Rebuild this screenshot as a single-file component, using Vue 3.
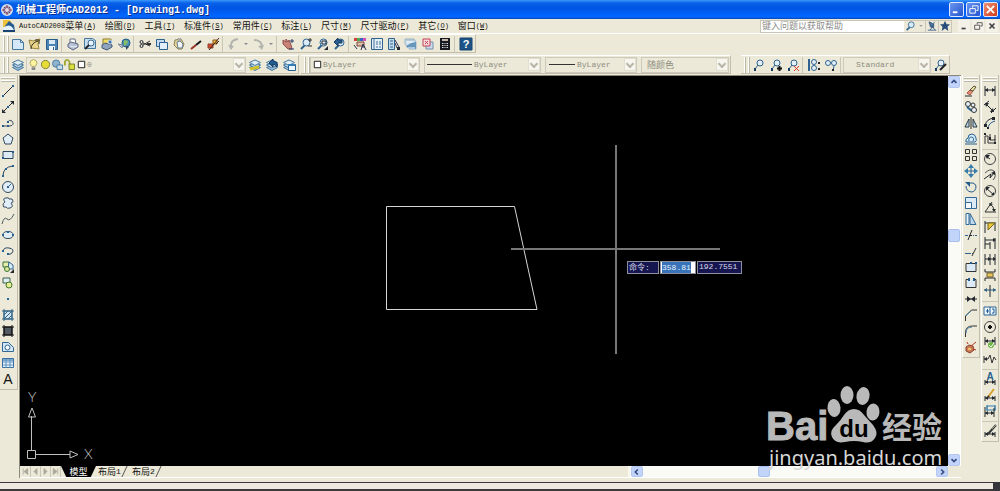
<script setup>
import { h } from 'vue'

const ink = '#23282e'
const blue = '#2f638f'
const pale = '#c3dcf2'
const line = (d, stroke = ink, width = 1) => ({ d, stroke, 'stroke-width': width, fill: 'none' })
const fill = (d, color = ink, stroke = 'none', width = 1) => ({ d, fill: color, stroke, 'stroke-width': width })
const ring = (x, y, r) => `M${x - r} ${y}a${r} ${r} 0 1 0 ${2 * r} 0a${r} ${r} 0 1 0 ${-2 * r} 0`

const stack = [
  fill('M.5 8.5L6 6l5.5 2.5L6 11.5z', '#9cbcd8', '#47799f'),
  fill('M.5 6L6 3.5 11.5 6 6 9z', '#bcd5e8', '#47799f'),
  fill('M.5 3.5L6 1l5.5 2.5L6 6.5z', '#e0edf5', '#47799f'),
]
const glass = [line('M2 11l4-4', blue, 2), fill(ring(7.5, 4.5, 3.5), '#d9ecfa', blue)]
const dims = line('M1 1v10M11 1v10M1 5h10')
const heads = fill('M1 5l3-2v4zM11 5l-3-2v4z')
const lowDim = [line('M1 7v5M11 7v5M1 9h10'), fill('M1 9l3-2v4zM11 9l-3-2v4z')]
const node = [fill(ring(7, 4, 3), '#e4eff7', blue), line('M5 6l-3 4', blue), fill('M1 9h2v3H1z', '#173c61')]

const icons = {
  gear: [fill(ring(6, 6, 5), '#8899bb', '#d9e0ee', 2), line('M3 3l6 6M9 3l-6 6M6 1v10M1 6h10', '#982f46'), fill(ring(6, 6, 2), '#e1ddeb')],
  file: [fill('M0 0h7l2 3v4H0z', '#efc23b'), fill('M2 6l4-5 5 4 1 7H0z', '#245c91'), fill('M1 7q5-3 8 0l2 3H0z', '#e3f0fa'), fill('M0 10h12v2H0z', '#194371')],
  page: [fill('M.5 1.5h8l3 3v7H.5z', '#d4e8f7', '#47799f'), line('M8.5 1.5v3h3', '#47799f')],
  open: [fill('M0 2l4 1 7-2-2 5 1 5-8-1z', '#ead58a', '#97843e'), line('M2 11q0-6 7-8M6 2h4v4', '#383321', 1)],
  save: [fill('M.5 1.5h11v10H.5z', '#4b83b4', '#285d88'), fill('M3 2h6v4H3z', '#d9eaf7'), fill('M3 8h6v4H3z', '#eff6fb'), fill('M7 9h1v3H7z', '#285d88')],
  print: [fill('M3 1h5l1 5H3z', '#fff', '#626d86'), fill('M1 6l3-2 7 2v3l-5 3-5-3z', '#b4bfd4', '#5f6985'), line('M3 8l4 1 3-1', '#eef2f7')],
  preview: [fill('M.5.5h8l3 2v8H.5z', '#c6ddf0', '#47799f'), fill(ring(7, 5, 3), '#e7f4fd', '#39678c'), line('M5 7l-4 4', ink, 2)],
  publish: [fill('M2 1h8v8H2z', '#f2dc5f', '#8b7c35'), fill('M1 7l3-2 7 2v2l-5 3-5-2z', '#8fa3bd', '#46597a'), fill(ring(9, 4, 2), '#3a70b0', '#cde')],
  globe: [fill(ring(8, 5, 4), '#4f91b5', '#225b83'), fill('M6 2l4 1-1 3-3 2z', '#89bd62'), fill('M0 6l5 1-1 3z', '#bac4d0', '#7a8798'), fill('M8 8l3 1-3 3z', '#394a60')],
  cut: [line('M11 3L4 7M11 8L4 5', '#333'), line('M8 6h4', '#333', 2), line(ring(2.5, 4, 1.5)), line(ring(2.5, 8, 1.5))],
  copy: [fill('M.5 1.5h8v7h-8z', pale, blue), fill('M3.500 4.500h8v7h-8z', '#e1effa', blue)],
  paste: [fill('M2 2l6-1 3 5-2 5H5L1 7z', '#e2d49a', '#8b8153'), fill('M4 4l3-1 3 3-1 4H5z', '#f5f7fb', '#677f92'), fill('M5 0h3v3H5z', '#aaa')],
  brush: [line('M1 11l5-4', '#9c3424', 2), line('M6 7l5-4', '#17191d', 2)],
  edit: [fill('M6 2h4v4H6z', '#efbd3a', '#8f5420'), fill('M1 6h5v4H1z', '#d64c2a', '#8b4131'), line('M2 12L12 0M9 6l3-3', '#3b2317')],
  undo: [line('M3 11V7q0-5 7-6', '#b4b5af', 2), fill('M0 7l3 5 3-4z', '#b4b5af')],
  redo: [line('M1 2q7 0 8 6', '#b4b5af', 2), fill('M5 8l4 4 2-5z', '#b4b5af')],
  caret: [fill('M4 5h4L6 7z', '#888')],
  pan: [fill('M1 2l3 2V1l2 3 1-2 2 5 1 4H6L1 6z', '#c98377', '#914f4c'), line('M8 3h4M10 1v4M7 11h5', '#253c67')],
  zoom: [...glass, line('M9 2h4M11 0v4M9 8h4', '#333')],
  zoomWindow: [...glass, line('M6 3h4v3H6z'), fill('M12 8v4H8z')],
  zoomPrevious: [...glass, fill('M1 4l4-4v2h4v3H5v3z', '#295d96', '#19395e')],
  properties: [fill('M0 0h3v3H0z', '#d23e3e'), fill('M3 0h3v3H3z', '#52a852'), fill('M6 0h3v3H6z', '#3b65c5'), fill('M9 0h3v3H9z', '#d050b8'), fill('M3 4h7v4H3z', '#ddbda7', '#7d483e'), line('M0 7l3 4M7 12l2-6 3 6M8 9h3', '#2b3453')],
  center: [fill('M.5.5h11v11H.5z', '#e2edf6', blue), line('M3 1v10M6 3v2M9 3v2M5 6h2M8 6h2M6 8v2M9 8v2', '#41739b')],
  palettes: [fill('M.5.5h6v11h-6z', '#c3daec', blue), line('M2 3h3M2 6h3M2 9h3', blue), line('M7 2l4 7M7 5l2 5', '#335'), fill('M9 9h3v3H9z')],
  sheets: [fill('M0 1h9l2 3v7H4l-4-5z', '#d3e2ed', '#9bb3c7'), fill('M1 8l5-3 5-1v7H4z', '#6897bd'), line('M2 4h6M3 10h7', '#f4f8fb'), line('M1 2h8', '#9bb3c7')],
  markup: [fill('M4 4h7v7H4z', '#c9dced', '#7492ad'), fill('M1 1h7v7H1z', '#f6d9dc', '#c44156', 1), line('M3 3l3 3M6 3L3 6', '#c44156')],
  calc: [fill('M1 0h10v12H1z', '#171a20'), fill('M3 1h6v2H3z', '#c9b9ad'), line('M3 5.500h6M3 7.500h6M3 9.500h6', '#ddd'), line('M5 4v7M7 4v7', '#171a20')],
  help: [fill('M0 0h12v12H0z', '#1c5387', '#174571')],
  layers: stack,
  layerMake: [...stack, line('M1 10l9-2', '#d0c329', 3)],
  layerPrevious: [...stack, fill('M3 4l4-4v2q6 1 4 6-2-3-4-3v3z', '#215d91', '#173c61')],
  layerStates: [...stack, fill('M5.500 5.500h7v6h-7z', '#eaf6ff', '#27618f'), fill('M5 5h7v2H5z', '#347cb5')],
  bulb: [fill('M4 8Q1 5 3 2q3-3 6 0 2 3-1 6z', '#fff4a0', '#a9a05f'), fill('M4 9h4v3H4z', '#888')],
  sun: [fill(ring(6, 6, 4.5), '#e7dc35', '#787d38')],
  freeze: [fill(ring(4.5, 5, 4), '#8eb4cd', '#47799f'), fill('M5.500 6.500h6v5h-6z', '#c7dbea', '#47799f')],
  lock: [line('M1 7V3q2-4 5 0v3', '#a2a932', 2), fill('M5.500 5.500h6v6h-6z', '#d8dc3c', '#717c27')],
  swatch: [fill('M2.500 2.500h7v7h-7z', '#fff', '#111')],
  query: [...glass],
  mic: [fill('M3 1l5 3v4L4 7z', '#5d7fa6', '#294b78'), line('M1 11h10M2 2l8 9M9 1L4 11', '#355b86')],
  star: [fill('M6 0l2 4h4L9 7l1 5-4-3-4 3 1-5-3-3h4z', '#294d7b')],
  visual: node,
  visualAdd: [...node, line('M7 9.500h5M9.500 7v5', '#111', 2)],
  visualRemove: [...node, line('M7 7l5 5M12 7l-5 5', '#d8372b', 1)],
  visualList: [line('M1 0v12', blue, 2), fill(ring(6, 3, 2.5), '#e4eff7', blue), fill(ring(6, 9, 2.5), '#e4eff7', blue), fill('M10 3h2v2h-2zM10 9h2v2h-2z')],
  visualPair: [fill(ring(3, 4, 2.5), '#e4eff7', blue), fill(ring(9, 4, 2.5), '#e4eff7', blue), line('M9 7l-1 5', blue), fill('M7 10h2v2H7z')],
  visualEdit: [...node, line('M6 11l6-6', '#222', 2)],
  lineTool: [line('M1 11L11 1'), fill('M0 10h2v2H0zM10 0h2v2h-2z', '#286493')],
  ray: [line('M1 11L11 1', ink), fill('M0 12V8l4 4zM12 0v4L8 0z'), fill('M5 5h2v2H5z', '#286493')],
  polyline: [line('M1 9h7q5-1 2-5-3-2-4 1', '#3f5366'), fill('M0 8h2v2H0zM5 8h2v2H5zM5 4h2v2H5z', '#285b87')],
  polygon: [fill('M6 1l5 4-2 6H3L1 5z', '#e1edf7', '#30485d')],
  rect: [fill('M1 2.500h10v7H1z', '#dceaf6', '#30485d'), fill('M0 8h2v2H0zM10 2h2v2h-2z', '#235c91')],
  arc: [line('M1 11q0-9 10-10', '#30485d'), fill('M0 10h2v2H0zM3 3h2v2H3zM10 0h2v2h-2z', '#286493')],
  circle: [fill(ring(6, 6, 5.5), '#e1edf7', '#30485d'), line('M6 6l3-3', '#286493', 1), fill('M5 5h2v2H5z', '#286493')],
  cloud: [fill('M3 5q-3-4 1-4 3-1 3 1 4-1 4 2 0 2-2 2 3 4-1 5-3 1-4-1-3 1-3-2 0-2 2-3z', '#e1edf7', '#384d62')],
  spline: [line('M0 11q2-8 5-5t7-5', '#4f5b60')],
  ellipse: [fill('M1 6q0-3.500 5-3.500T11 6 6 9.500 1 6', '#e1edf7', '#30485d'), fill('M0 5h2v2H0zM10 5h2v2h-2zM5 2h2v2H5z', '#286493')],
  ellipseArc: [line('M1 6q1-4 6-3 6 1 3 5-2 2-4 1', '#30485d', 1), fill('M0 5h2v2H0zM5 8h2v2H5z', '#286493')],
  block: [fill('M1 1h6v5H1z', '#e7efaf', '#3c713c'), fill('M7 1l4 3v4H6z', '#d9ecfa', blue), fill(ring(5, 8, 2.5), '#d8e99d', '#3d7335'), fill('M12 8v4H8z')],
  blockMake: [fill('M1 1h7v5H1z', '#deedf4', '#3a604c'), fill(ring(7, 8, 3), '#e6ef97', '#42762b')],
  point: [fill('M5 5h2v2H5z', '#286493')],
  hatch: [fill('M2 2h8v8H2z', '#d3e7f4', '#326284'), line('M2 0v12M10 0v12M0 2h12M0 10h12M2 6l4-4M2 10l8-8M6 10l4-4', '#326284')],
  gradient: [fill('M2 2h8v8H2z', '#515a63', '#111'), line('M2 0v12M10 0v12M0 2h12M0 10h12', '#111')],
  region: [fill('M.5 10.500v-9h6l5 5v4z', '#d5e7f6', '#316897'), fill(ring(5.5, 6.5, 2.5), '#f6fafc', '#316897')],
  table: [fill('M.5 1.500h11v9H.5z', '#eaf4fc', '#3971a4'), fill('M1 2h10v2H1z', '#7ba9d0'), line('M4 2v9M8 2v9M1 5h10M1 8h10', '#5b91bf')],
  erase: [fill('M2 8l3-3 3 1-3 4z', '#e58f7f', '#a65139'), fill('M5 5l4-4 2 1-3 4z', '#eee3a2', '#5a5138'), line('M0 11h7', '#242d31')],
  copyObjects: [fill(ring(3, 3, 2.5), '#e4eff7', '#333'), fill(ring(8, 4, 2), '#e4eff7', '#333'), line('M2 6l5 4', '#27618f', 2), fill(ring(9, 9, 2.5), '#e4eff7', '#333')],
  mirror: [fill('M0 10h4V2zM12 10H8V2z', '#bdd9ed', '#26363e'), line('M6 0v12')],
  offset: [fill('M3 5q0-4 4-4 3 0 4 4 1 3-1 4H1q-1-3 2-4z', '#d9ecfa', '#27618f'), line('M4 8q-1-4 3-4 3 1 1 4M0 11h12', '#27618f')],
  array: [line('M.5.5h4v4h-4zM7.500.5h4v4h-4zM.5 7.500h4v4h-4zM7.500 7.500h4v4h-4z', '#333', 1)],
  move: [line('M6 1v10M1 6h10', blue, 1), fill('M6-1l3 4H3zM6 13l3-4H3zM-1 6l4-3v6zM13 6L9 3v6z', '#347cac')],
  rotate: [line('M3 3q6-3 8 2 0 6-5 6-5-1-5-6', '#235c8d', 1), fill('M0 1h5v5z', '#235c8d')],
  scale: [fill('M.5.5h11v11H.5z', '#dceaf6', '#316897'), fill('M.5 5.500h6v6h-6z', '#f6faff', '#316897')],
  stretch: [fill('M1 .5h3v11H1z', '#e7f2fa', '#316897'), fill('M5 .5l6 11H5z', '#bed9ee', '#316897')],
  trim: [line('M0 6.500h3M8 6.500h1M10 6.500h2', blue), line('M3 11L7 1M4 6.500h3')],
  extend: [line('M0 8.500h6M7 8.500h1', blue), line('M7 11l4-8', '#333')],
  breakPoint: [fill('M1 2.500h10v8H1z', '#dceaf6', '#333'), fill('M5 1h2v2H5zM10 1h2v2h-2z', '#245c91')],
  breakTool: [fill('M2 3h8v7H2z', '#dceaf6'), line('M4 2.500H1v8h10v-8H8', '#333'), fill('M3 1h2v3H3zM8 1h2v3H8z', '#245c91')],
  join: [line('M0 6h12', ink, 1), fill('M2 3l4 3-4 3zM10 3L6 6l4 3z')],
  chamfer: [line('M.5 12V7l6-6H12', '#333'), line('M1 7l5-5', '#427ea9', 1)],
  fillet: [line('M.5 12V8q0-7 7-7H12', '#333'), line('M1 8q0-6 6-6', '#427ea9', 1)],
  explode: [fill('M1 6l3-2 4 1 1 4-4 3-4-2z', '#c67b55', '#8a4030'), line('M6 5l5-4M8 8l3 1M2 1l1 2', '#b83824', 1), fill('M3 7h3v2H3z', '#f0c36d')],
  linear: [dims, heads],
  aligned: [line('M0 4l5-4M7 12l5-5M2 3l7 7'), fill('M1 2h4L2 6zM10 11H6l3-4z')],
  arcLength: [line('M1 9q1-7 9-8', ink), line('M4 12q0-6 7-8', '#27618f'), fill('M0 7h3v3H0zM8 0h3v3H8zM3 10h2v2H3z')],
  ordinate: [line('M1 11V3h3v7h7V6M6 1v6h5V2', '#333'), fill('M0 0h2v2H0zM5 4h2v3H5zM10 9h2v2h-2z')],
  radius: [line(ring(6, 6, 5.5), '#444'), line('M6 6L2 3'), fill('M1 2h5L3 6z')],
  jogged: [line('M1 4q5-5 9-2 3 5-1 9', '#555'), line('M0 10l7-5-1 4 4-5'), fill('M11 2v4L7 4z')],
  diameter: [line(ring(6, 6, 5.5), '#444'), line('M2 3l8 7'), fill('M2 2h4L2 6zM10 10H7l3-3z')],
  angular: [line('M8 1L1 11h11M6 3q4 2 4 7', '#333'), fill('M5 2l4 1-3 2zM8 8h4l-2 3z')],
  quick: [line('M1 0v12M1 2h9M5 3v5M11 1v9'), fill('M4 2h7L4 9z', '#efc837', '#746521')],
  baseline: [line('M1 0v12M6 5v7M11 1v11M1 3h10M1 7h5'), fill('M9 1l3 2-3 2z')],
  continue: [line('M1 1v11M6 1v11M11 1v11M1 6h10'), fill('M4 4l3 2-3 2zM9 4l3 2-3 2z')],
  space: [line('M1 0v3h10V0M1 12V9h10v3'), fill('M3 4h6v4H3z', '#eac45c', '#6e6031')],
  breakDim: [line('M0 5h12', '#316081'), line('M6 0v12'), fill('M0 5l3-2v4zM12 5L9 3v4z', '#316081')],
  tolerance: [fill('M0 2h12v8H0z', '#eaf6fe', blue), line('M6 2v8M2 6h3M3.500 4v4M8 4h2v4H8', '#245c91', 1)],
  centerMark: [line(ring(6, 6, 5.5), '#444'), line('M4 6h4M6 4v4', '#111', 2)],
  inspect: [line('M1 0v8M11 0v8M1 4h10'), fill('M1 4l3-2v4zM11 4L8 2v4z'), fill(ring(7, 8, 3), '#69b545'), line('M5 8l2 2 3-4', '#fff')],
  jogLine: [line('M0 3v7M0 6h4l2-4 2 8 2-6 2 3', '#333'), fill('M0 6l3-2v4z')],
  dimText: [...lowDim],
  dimEdit: [...lowDim, line('M4 8l6-8', '#d8a02f', 2), line('M4 8l1-1', '#333', 2)],
  update: [line('M3 1h8v4H3zM3 0v6M11 0v6', '#347cac'), line('M1 2v10M10 3v9M1 8h9'), fill('M1 8l3-2v4zM10 8L7 6v4z')],
  dimStyle: [...lowDim, line('M4 9l8-9', '#343638', 2), line('M8 4l4-4', '#9ca388')],
}

const Glyph = (props) =>
  h('svg', { viewBox: '0 0 12 12', width: 12, height: 12, overflow: 'visible', 'aria-hidden': 'true' }, [
    ...icons[props.name].map((shape) => h('path', shape)),
    props.name === 'help' ? h('text', { x: 6, y: 10, fill: '#fff', 'font-size': 11, 'font-weight': 700, 'font-family': 'Liberation Sans, sans-serif', 'text-anchor': 'middle' }, '?') : null,
    props.name === 'dimText' ? h('text', { x: 6, y: 7, fill: '#27618f', 'font-size': 10, 'font-weight': 700, 'font-family': 'Liberation Sans, sans-serif', 'text-anchor': 'middle' }, 'A') : null,
  ])
Glyph.props = ['name']

const menus = [
  ['AutoCAD2008', '菜单', 'A'], ['', '绘图', 'D'], ['', '工具', 'T'], ['', '标准件', 'S'], ['', '常用件', 'C'],
  ['', '标注', 'L'], ['', '尺寸', 'M'], ['', '尺寸驱动', 'P'], ['', '其它', 'O'], ['', '窗口', 'W'],
]
const standard = [
  ['page', 'open', 'save'], ['print', 'preview', 'publish', 'globe'], ['cut', 'copy', 'paste', 'brush', 'edit'],
  ['undo', 'caret', 'redo', 'caret'], ['pan', 'zoom', 'zoomWindow', 'zoomPrevious'],
  ['properties', 'center', 'palettes', 'sheets', 'markup', 'calc'], ['help'],
]
const draw = [['lineTool', 'ray', 'polyline', 'polygon', 'rect', 'arc', 'circle', 'cloud', 'spline', 'ellipse', 'ellipseArc', 'block', 'blockMake', 'point', 'hatch', 'gradient', 'region', 'table', 'text']]
const modify = [['erase', 'copyObjects', 'mirror', 'offset', 'array', 'move', 'rotate', 'scale', 'stretch', 'trim', 'extend', 'breakPoint', 'breakTool', 'join', 'chamfer', 'fillet', 'explode']]
const dimension = [
  ['linear', 'aligned', 'arcLength', 'ordinate'], ['radius', 'jogged', 'diameter', 'angular'],
  ['quick', 'baseline', 'continue', 'space', 'breakDim'], ['tolerance', 'centerMark', 'inspect', 'jogLine'],
  ['dimText', 'dimEdit', 'update'], ['dimStyle'],
]
const pages = [['first', 'M3 2v8M9 2L4 6l5 4z'], ['previous', 'M8 2L4 6l4 4z'], ['next', 'M4 2l4 4-4 4z'], ['last', 'M9 2v8M3 2l5 4-5 4z']]
</script>

<template>
  <div class="window">
    <header class="title">
      <Glyph name="gear" />
      <h1><span class="han">机械工程师</span>CAD2012 - [Drawing1.dwg]</h1>
      <button class="win" aria-label="minimize"><svg viewBox="0 0 12 12"><path d="M2 9h5" /></svg></button>
      <button class="win" aria-label="restore"><svg viewBox="0 0 12 12"><path class="thin" d="M5 4V2h6v5H9M2 5h6v5H2z" /></svg></button>
      <button class="win close" aria-label="close"><svg viewBox="0 0 12 12"><path d="M2 2l8 8M10 2l-8 8" /></svg></button>
    </header>

    <nav class="menubar">
      <Glyph name="file" />
      <button v-for="m in menus" :key="m[1]" class="menu"><span v-if="m[0]" class="mono">{{ m[0] }}</span>{{ m[1] }}<span class="mono">(<u>{{ m[2] }}</u>)</span></button>
      <div class="helpbox">
        <input type="text" aria-label="help search" placeholder="键入问题以获取帮助">
        <button aria-label="search"><Glyph name="query" /></button>
        <button class="narrow" aria-label="search options"><Glyph name="caret" /></button>
        <button class="framed" aria-label="communication"><Glyph name="mic" /></button>
        <button aria-label="favorites"><Glyph name="star" /></button>
      </div>
      <div class="child">
        <button aria-label="minimize drawing"><svg viewBox="0 0 12 12"><path d="M3 9h5" /></svg></button>
        <button aria-label="restore drawing"><svg viewBox="0 0 12 12"><path class="thin" d="M5 4V2h6v4H9M2 5h6v5H2z" /></svg></button>
        <button aria-label="close drawing"><svg viewBox="0 0 12 12"><path d="M3 3l6 6M9 3L3 9" /></svg></button>
      </div>
    </nav>

    <div class="row">
      <div class="bar">
        <i class="grip"></i>
        <div v-for="(group, g) in standard" :key="g" class="group">
          <button v-for="(name, i) in group" :key="i" class="tool" :class="{ slim: name === 'caret' }" :aria-label="name"><Glyph :name="name" /></button>
        </div>
      </div>
    </div>

    <div class="row second">
      <div class="bar">
        <i class="grip"></i>
        <button class="tool" aria-label="layers"><Glyph name="layers" /></button>
        <div class="combo layer">
          <Glyph v-for="n in ['bulb', 'sun', 'freeze', 'lock', 'swatch']" :key="n" :name="n" />
          <select disabled aria-label="layer"><option>0</option></select><i class="arrow"></i>
        </div>
        <button v-for="n in ['layerMake', 'layerPrevious', 'layerStates']" :key="n" class="tool" :aria-label="n"><Glyph :name="n" /></button>
      </div>
      <div class="bar">
        <i class="grip"></i>
        <div class="combo color"><Glyph name="swatch" /><select disabled aria-label="color"><option>ByLayer</option></select><i class="arrow"></i></div>
        <div class="combo linetype"><i class="sample"></i><select disabled aria-label="linetype"><option>ByLayer</option></select><i class="arrow"></i></div>
        <div class="combo weight"><i class="sample"></i><select disabled aria-label="lineweight"><option>ByLayer</option></select><i class="arrow"></i></div>
        <div class="combo plot"><select class="han" disabled aria-label="plot style"><option>随颜色</option></select><i class="arrow"></i></div>
      </div>
      <div class="bar apart">
        <i class="grip"></i>
        <div class="group"><button v-for="n in ['visual', 'visualAdd', 'visualRemove']" :key="n" class="tool" :aria-label="n"><Glyph :name="n" /></button></div>
        <div class="group"><button v-for="n in ['visualList', 'visualPair']" :key="n" class="tool" :aria-label="n"><Glyph :name="n" /></button></div>
        <div class="group">
          <div class="combo style"><select disabled aria-label="style"><option>Standard</option></select><i class="arrow"></i></div>
          <button class="tool" aria-label="visualEdit"><Glyph name="visualEdit" /></button>
        </div>
      </div>
    </div>

    <main>
      <aside class="side">
        <i class="grip flat"></i>
        <div v-for="(group, g) in draw" :key="g" class="stack">
          <button v-for="name in group" :key="name" class="tool" :aria-label="name">
            <b v-if="name === 'text'">A</b><Glyph v-else :name="name" />
          </button>
        </div>
      </aside>

      <section class="document">
        <div class="upper">
          <div class="canvas">
            <svg class="scene" aria-hidden="true">
              <path class="shape" d="M366.5 130.5h128l22.5 103H366.5z" />
              <path class="cross" d="M596 69v209M491 173h209" />
              <path class="ucs" d="M7.500 374.500h8v8h-8zM11.500 374v-34M8.500 341h7L12 332zM16 378.500h34M50 375v7l8-3.500z" />
              <text x="8" y="326">Y</text><text x="64" y="383">X</text>
            </svg>
            <div class="prompt">
              <label for="coord"><span class="han">命令</span>:</label>
              <span class="active"><input id="coord" type="text" value="358.81"></span>
              <output>192.7551</output>
            </div>
          </div>
          <div class="vscroll">
            <button aria-label="scroll up"><svg viewBox="0 0 12 12"><path d="M3 7l3-3 3 3" /></svg></button>
            <i class="before"></i><i class="thumb"></i><i class="after"></i>
            <button aria-label="scroll down"><svg viewBox="0 0 12 12"><path d="M3 5l3 3 3-3" /></svg></button>
          </div>
        </div>
        <div class="tabs">
          <button v-for="p in pages" :key="p[0]" class="page" :aria-label="p[0]"><svg viewBox="0 0 12 12"><path :d="p[1]" /></svg></button>
          <button class="tab current">模型</button>
          <button class="tab">布局<span class="mono">1</span></button>
          <button class="tab">布局<span class="mono">2</span></button>
          <div class="hscroll">
            <button aria-label="scroll left"><svg viewBox="0 0 12 12"><path d="M7 3L4 6l3 3" /></svg></button>
            <i class="before"></i><i class="thumb"></i><i class="after"></i>
            <button aria-label="scroll right"><svg viewBox="0 0 12 12"><path d="M5 3l3 3-3 3" /></svg></button>
          </div>
        </div>
        <svg class="logo" viewBox="0 0 184 88" role="img" aria-label="Baidu">
          <g fill="#b9b9b9">
            <text x="2" y="57" class="brand">Bai</text>
            <ellipse cx="70" cy="25" rx="6.5" ry="9" transform="rotate(-6 70 25)" />
            <ellipse cx="83" cy="12" rx="6.5" ry="9" />
            <ellipse cx="99" cy="13" rx="6.5" ry="9" transform="rotate(10 99 13)" />
            <ellipse cx="109" cy="29" rx="6.5" ry="8.5" transform="rotate(6 109 29)" />
            <path d="M90 26q6 0 10 6l9 10q6 8 2 13-4 6-12 4-9-2-18 0-10 2-13-5-3-6 4-12 5-5 8-10 4-6 10-6z" />
            <text x="118" y="55" class="cn">经验</text>
          </g>
          <text x="90" y="54" class="du" text-anchor="middle">du</text>
          <text x="5" y="82" class="site">jingyan.baidu.com</text>
        </svg>
      </section>

      <aside class="side right">
        <i class="grip flat"></i>
        <div v-for="(group, g) in modify" :key="g" class="stack"><button v-for="name in group" :key="name" class="tool" :aria-label="name"><Glyph :name="name" /></button></div>
      </aside>
      <aside class="side right">
        <i class="grip flat"></i>
        <div v-for="(group, g) in dimension" :key="g" class="stack"><button v-for="name in group" :key="name" class="tool" :aria-label="name"><Glyph :name="name" /></button></div>
      </aside>
    </main>
    <footer><i class="command"></i><i class="corner"></i></footer>
  </div>
</template>

<style>
body { background: #ece9d8; overflow: hidden; }
</style>

<style scoped>
* { box-sizing: border-box; }
.window { display: flex; flex-direction: column; height: 100vh; background: #ece9d8; color: #111; font: 9px/12px "Noto Sans CJK SC", sans-serif; }
button { display: flex; align-items: center; justify-content: center; flex: none; margin: 0; padding: 0; border: 0; background: none; color: inherit; font: inherit; }
svg { display: block; flex: none; }
.mono { font-family: "Liberation Mono", monospace; font-size: 7px; }
.han { font-family: "Noto Sans CJK SC", sans-serif; }
.title { display: flex; align-items: center; gap: 3px; flex: none; height: 19px; padding: 0 2px 0 1px; background: linear-gradient(#3c98fc 0, #0862e8 3px, #0054e3 8px, #0160f6 13px, #0166ff 17px, #0746b4 19px); }
h1 { flex: 1; margin: 0; color: #fff; font: bold 10px/18px "Liberation Mono", monospace; text-shadow: 1px 1px #0b2f8a; white-space: pre; }
.win { width: 15px; height: 15px; border: 1px solid #dce8ff; border-radius: 2px; background: linear-gradient(135deg, #6d96f0, #2355cf); margin-left: -1px; }
.win svg { width: 11px; height: 11px; }
.win path { stroke: #fff; stroke-width: 2; fill: none; }
.win .thin { stroke-width: 1; }
.close { background: linear-gradient(135deg, #ee9074, #cf3b18); }
.menubar { display: flex; align-items: center; flex: none; height: 15px; padding: 0 2px 0 3px; border-bottom: 1px solid #fff; }
.menu { margin-left: 9px; white-space: pre; }
.menu:first-of-type { margin-left: 4px; }
.helpbox { display: flex; align-items: center; height: 13px; margin-left: auto; border: 1px solid #c9c6b8; background: #fff; }
.helpbox input { width: 143px; height: 11px; padding: 0 1px; border: 0; background: #fff; font: inherit; }
.helpbox input::placeholder { color: #8b8b88; opacity: 1; }
.helpbox button { width: 12px; height: 11px; background: #ece9d8; }
.helpbox .narrow { width: 9px; }
.helpbox .framed { width: 14px; border: 1px solid #c9c6b8; border-width: 0 1px; }
.helpbox svg { width: 10px; height: 10px; }
.child { display: flex; gap: 2px; margin-left: 6px; }
.child button { width: 12px; height: 12px; background: #f3f1e8; }
.child svg { width: 10px; height: 10px; }
.child path { stroke: #444; stroke-width: 2; fill: none; }
.child .thin { stroke-width: 1; }
.row { display: flex; gap: 2px; flex: none; height: 20px; }
.second { height: 21px; padding-top: 1px; }
.bar { display: flex; align-items: center; height: 19px; padding: 0 1px 0 3px; border: 1px solid #c2bfae; border-top-color: #fff; border-left-color: #fff; border-width: 1px 1px 1px 0; }
.apart { margin-left: 8px; }
.grip { flex: none; width: 5px; height: 16px; border: 1px solid #fff; border-width: 0 1px; box-shadow: 1px 0 #bdb9a7, inset 1px 0 #bdb9a7; margin-right: 1px; }
.group { display: flex; align-items: center; }
.group + .group { margin-left: 1px; padding-left: 2px; border-left: 1px solid #c9c6b5; }
.tool { width: 17px; height: 16px; }
.slim { width: 8px; }
.combo { display: flex; align-items: center; height: 16px; border: 1px solid #cdcabb; color: #8f8d80; margin-right: 4px; }
.combo svg { margin-left: 1px; width: 11px; height: 11px; }
.combo select { flex: 1; min-width: 0; height: 14px; padding: 0; margin: 0; border: 0; background: none; appearance: none; color: #8f8d80; opacity: 1; font: 8px/14px "Liberation Mono", monospace; }
.combo select.han { font: 9px/14px "Noto Sans CJK SC", sans-serif; padding-left: 5px; }
.arrow { display: flex; align-items: center; justify-content: center; flex: none; width: 12px; height: 13px; background: #f6f5ee; border: 1px solid #e2dfd1; }
.arrow::before { content: ""; width: 4px; height: 4px; margin-bottom: 2px; border: solid #b9b6a8; border-width: 0 2px 2px 0; transform: rotate(45deg); }
.layer { width: 220px; margin-right: 0; }
.color { width: 110px; }
.linetype { width: 117px; }
.weight { width: 92px; }
.plot { width: 88px; margin-right: 0; }
.style { width: 88px; margin-right: 0; }
.style select { padding-left: 12px; }
.sample { width: 45px; height: 1px; margin: 0 2px; background: #333; }
.weight .sample { width: 26px; margin-left: 3px; }
main { display: flex; align-items: flex-start; flex: 1; min-height: 0; padding-right: 1px; }
.side { flex: none; width: 18px; padding: 2px 0; margin-right: 1px; border: 1px solid #c2bfae; border-width: 0 1px 1px 0; }
.right { margin: 0 0 0 1px; border-left: 1px solid #fff; }
.side .tool { width: 16px; height: 16px; }
.side b { font: 14px/16px "Liberation Sans", sans-serif; }
.flat { display: block; width: 14px; height: 4px; margin: 0 1px 2px; border-width: 1px 0; box-shadow: 0 1px #bdb9a7, inset 0 1px #bdb9a7; }
.stack + .stack { margin-top: 2px; padding-top: 1px; border-top: 1px solid #c9c6b5; }
.document { position: relative; display: flex; flex-direction: column; flex: 1; min-width: 0; align-self: stretch; border: 1px solid #8b887c; border-width: 1px 0 0 1px; }
.upper { display: flex; flex: 1; min-height: 0; }
.canvas { position: relative; flex: 1; min-width: 0; overflow: hidden; background: #000; }
.scene { position: absolute; inset: 0; width: 100%; height: 100%; }
.scene path { fill: none; }
.shape { stroke: #d4d4d4; }
.cross { stroke: #777; stroke-width: 2; }
.ucs { stroke: #c0c0c0; }
.scene text { fill: #c8c8c8; font: 300 14px Lato, sans-serif; }
.prompt { position: absolute; left: 607px; top: 185px; display: flex; gap: 1px; color: #d9d9e6; font: 8px/10px "Liberation Mono", monospace; }
.prompt > * { height: 13px; border: 1px solid #8e8e9c; background: #15154f; }
.prompt label { width: 32px; padding-left: 1px; }
.prompt .active { width: 36px; padding-left: 1px; background: #fff; }
.prompt input { display: block; width: 29px; height: 11px; padding: 0; border: 0; background: #3872b8; color: #e8f1fc; font: inherit; }
.prompt output { width: 45px; padding-left: 1px; }
.vscroll { display: flex; flex-direction: column; align-items: center; flex: none; width: 13px; background: #fafaf6; border-right: 1px solid #fff; }
.vscroll button, .hscroll button { width: 12px; height: 12px; border: 1px solid #b3c7f2; border-radius: 2px; background: #c3d4fb; }
.vscroll path, .hscroll path { fill: none; stroke: #354c83; stroke-width: 2; }
.thumb { flex: none; width: 12px; height: 13px; border: 1px solid #a9c0ec; border-radius: 2px; background: #c3d4fb; }
.vscroll .before { flex: 40; }
.vscroll .after { flex: 60; }
.hscroll .before { flex: 41; }
.hscroll .after { flex: 59; }
.tabs { display: flex; flex: none; height: 12px; padding-left: 1px; border-bottom: 1px solid #fff; }
.page { width: 10px; border: 1px solid #c9c6b5; border-width: 0 1px 0 0; }
.page svg { width: 9px; height: 9px; }
.page path { fill: #aaa79a; stroke: #aaa79a; }
.tab { position: relative; justify-content: flex-start; width: 34px; padding-left: 2px; font-size: 9px; }
.tab .mono { font-size: 8px; }
.tab::after { content: ""; position: absolute; right: 5px; top: 0; height: 11px; border-right: 1px solid #555; transform: skewX(-25deg); }
.current { justify-content: center; width: 35px; padding: 0; background: #000; color: #fff; clip-path: polygon(0 0, 100% 0, 85% 100%, 15% 100%); }
.current::after { content: none; }
.hscroll { display: flex; width: 34%; margin-left: auto; margin-right: 13px; border-left: 3px solid #f8f7f1; background: #fafaf6; }
.hscroll button { height: 11px; }
.hscroll .thumb { height: 11px; }
.logo { position: absolute; right: 13px; bottom: 7px; width: 184px; height: 88px; }
.brand { font: bold 40px "Liberation Sans", sans-serif; stroke: #b9b9b9; stroke-width: 1; }
.cn { font: bold 30px "Noto Sans CJK SC", sans-serif; }
.du { fill: #000; font: bold 24px "Liberation Sans", sans-serif; }
.site { fill: #d8d8d8; font: 20px "Noto Sans", sans-serif; }
footer { display: flex; flex: none; height: 13px; padding-top: 4px; }
.command { flex: 1; border: solid #3a3a3a; border-width: 1px 0 2px; background: #efeadf; }
.corner { width: 7px; background: #34363b; }
</style>
